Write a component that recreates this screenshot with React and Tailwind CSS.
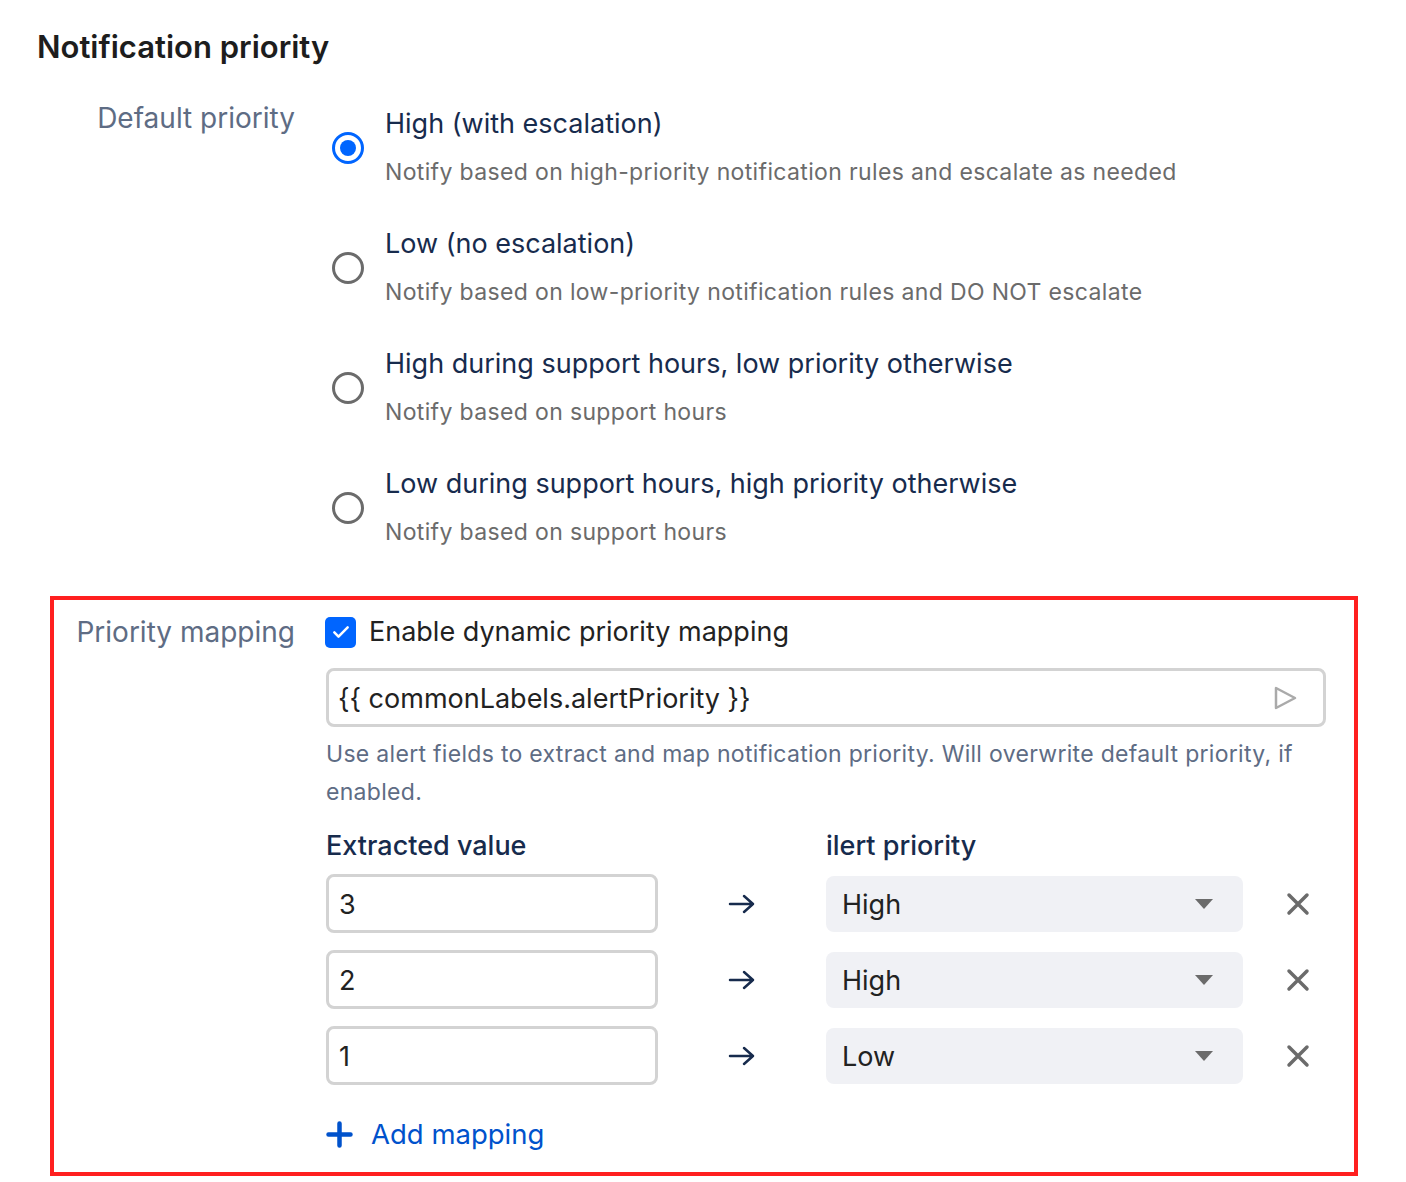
import React from 'react';

const font = { fontFamily: 'Inter, "Noto Sans", sans-serif' };

const options = [
  { title: 'High (with escalation)', desc: 'Notify based on high-priority notification rules and escalate as needed', checked: true },
  { title: 'Low (no escalation)', desc: 'Notify based on low-priority notification rules and DO NOT escalate' },
  { title: 'High during support hours, low priority otherwise', desc: 'Notify based on support hours' },
  { title: 'Low during support hours, high priority otherwise', desc: 'Notify based on support hours' },
];

const mappings = [
  { value: '3', priority: 'High' },
  { value: '2', priority: 'High' },
  { value: '1', priority: 'Low' },
];

const Radio = ({ checked }) =>
  checked ? (
    <div className="w-[32px] h-[32px] rounded-full border-[3px] border-[#0065ff] flex items-center justify-center">
      <div className="w-[16px] h-[16px] rounded-full bg-[#0065ff]"></div>
    </div>
  ) : (
    <div className="w-[32px] h-[32px] rounded-full border-[3px] border-[#6b6b6b]"></div>
  );

export default function App() {
  return (
    <div className="bg-white w-[1406px] h-[1182px] overflow-hidden" style={font}>
      <h1 className="pt-[28px] pl-[37px] text-[31px] leading-[38px] font-semibold text-[#1d1d1d]">
        Notification priority
      </h1>

      {/* default priority */}
      <div className="flex mt-[40px]">
        <div className="w-[295px] text-right text-[28px] leading-[24px] text-[#5e6c84] shrink-0">
          Default priority
        </div>
        <div className="ml-[37px]">
          {options.map((o) => (
            <div key={o.title} className="flex h-[120px]">
              <div className="mt-[26px]">
                <Radio checked={o.checked} />
              </div>
              <div className="ml-[21px]">
                <div className="text-[27px] leading-[36px] text-[#172b4d]">{o.title}</div>
                <div className="mt-[12px] text-[23px] leading-[36px] text-[#6b6b6b] tracking-[0.35px]">{o.desc}</div>
              </div>
            </div>
          ))}
        </div>
      </div>

      {/* priority mapping */}
      <div className="ml-[50px] mt-[10px] w-[1308px] h-[580px] border-[4px] border-[#ff1f1f] pt-[14px] pr-[28px] flex">
        <div className="w-[241px] shrink-0 text-right text-[28px] leading-[36px] text-[#5e6c84]">
          Priority mapping
        </div>
        <div className="ml-[31px] flex-1">
          <div className="flex items-center h-[36px]">
            <div className="w-[31px] h-[31px] -ml-[1px] rounded-[5px] bg-[#0065ff] flex items-center justify-center">
              <svg width="20" height="20" viewBox="0 0 24 24" fill="none" stroke="white" strokeWidth="3" strokeLinecap="round" strokeLinejoin="round">
                <path d="M4 12.5l5 5L20 6.5" />
              </svg>
            </div>
            <span className="ml-[13px] text-[27px] text-[#222]">Enable dynamic priority mapping</span>
          </div>

          <div className="mt-[18px] h-[59px] border-[3px] border-[#d3d3d3] rounded-[8px] flex items-center pl-[9px] pr-[26px]">
            <span className="flex-1 pt-[3px] text-[27px] text-[#222]">{'{{ commonLabels.alertPriority }}'}</span>
            <svg width="24" height="26" viewBox="0 0 24 26" fill="none" stroke="#aaaaaa" strokeWidth="2.5" strokeLinejoin="round">
              <path d="M3 3v20l19-10z" />
            </svg>
          </div>

          <div className="mt-[8px] text-[23px] leading-[38px] text-[#5e6c84] tracking-[0.3px]">
            <span className="whitespace-nowrap">Use alert fields to extract and map notification priority. Will overwrite default priority, if</span>
            <br />
            enabled.
          </div>

          <div className="mt-[17px] flex text-[27px] leading-[36px] font-medium text-[#172b4d]">
            <div className="w-[500px]">Extracted value</div>
            <div>ilert priority</div>
          </div>

          <div className="mt-[10px] flex flex-col gap-[17px]">
            {mappings.map((m) => (
              <div key={m.value} className="flex items-center h-[59px]">
                <div className="w-[332px] h-[59px] border-[3px] border-[#d3d3d3] rounded-[8px] flex items-center pl-[10px] pt-[3px] text-[27px] text-[#222]">
                  {m.value}
                </div>
                <div className="w-[168px] flex justify-center">
                  <svg width="28" height="22" viewBox="0 0 28 22" fill="none" stroke="#172b4d" strokeWidth="2.5" strokeLinecap="round" strokeLinejoin="round">
                    <path d="M2 11h23M16 3l9 8-9 8" />
                  </svg>
                </div>
                <div className="w-[417px] h-[56px] rounded-[8px] bg-[#f0f1f5] flex items-center pl-[16px] pr-[30px]">
                  <span className="flex-1 pt-[3px] text-[27px] text-[#222]">{m.priority}</span>
                  <svg width="18" height="10" viewBox="0 0 18 10">
                    <path d="M0 0h18L9 10z" fill="#6b6b6b" />
                  </svg>
                </div>
                <div className="ml-[43px]">
                  <svg width="24" height="24" viewBox="0 0 24 24" fill="none" stroke="#6b6b6b" strokeWidth="3.5" strokeLinecap="round">
                    <path d="M3 3l18 18M21 3L3 21" />
                  </svg>
                </div>
              </div>
            ))}
          </div>

          <div className="mt-[31px] flex items-center h-[36px] text-[#0052cc]">
            <svg width="27" height="27" viewBox="0 0 27 27" fill="none" stroke="#0052cc" strokeWidth="4.5" strokeLinecap="round">
              <path d="M13.5 2.5v22M2.5 13.5h22" />
            </svg>
            <span className="ml-[18px] pt-[2px] text-[27.5px]">Add mapping</span>
          </div>
        </div>
      </div>
    </div>
  );
}
